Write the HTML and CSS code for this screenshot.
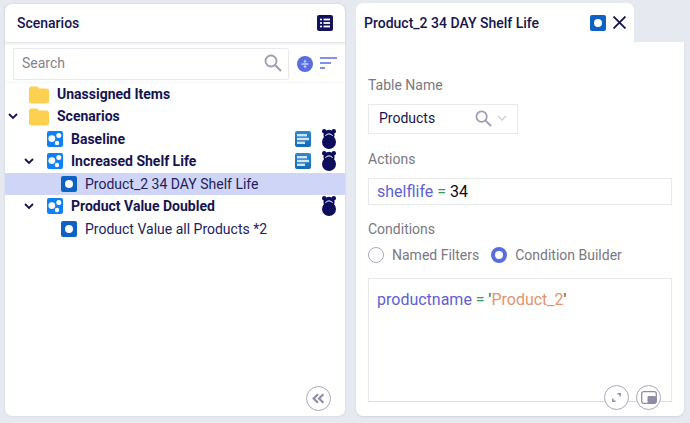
FILE: index.html
```html
<!DOCTYPE html>
<html lang="en">
<head>
<meta charset="utf-8">
<title>Scenarios</title>
<link rel="stylesheet" href="styles.css">
</head>
<body>
<svg class="defs" width="0" height="0" aria-hidden="true">
  <defs>
    <linearGradient id="listfill" x1="0" y1="0" x2="0" y2="1"><stop offset="0" stop-color="#2b8ad6"/><stop offset="1" stop-color="#1769b4"/></linearGradient>
    <symbol id="folder" viewBox="0 0 20 18"><path fill="#fdd04f" d="M0 3a2.500 2.500 0 0 1 2.500-2.500h4.500c1.300 0 2 .6 2.600 1.500l.4.500h7.500a2.500 2.500 0 0 1 2.500 2.500v10a2.500 2.500 0 0 1-2.500 2.500h-15a2.500 2.500 0 0 1-2.500-2.500z"/></symbol>
    <symbol id="scen" viewBox="0 0 16 16"><rect width="16" height="16" rx="2" fill="#0f80f5"/><circle cx="4.800" cy="7.600" r="3.400" fill="#fff"/><circle cx="11.800" cy="4.600" r="2.500" fill="#fff"/><circle cx="10" cy="12" r="2.200" fill="#fff"/></symbol>
    <symbol id="item" viewBox="0 0 16 16"><rect width="16" height="16" rx="2" fill="#0d62c4"/><circle cx="8" cy="8" r="4" fill="#fff"/></symbol>
    <symbol id="list" viewBox="0 0 16 16"><rect width="16" height="16" rx="2" fill="url(#listfill)"/><rect x="2" y="3" width="10" height="2.400" fill="#cfe4f6"/><rect x="2" y="6.800" width="12" height="2.400" fill="#cfe4f6"/><rect x="2" y="10.600" width="8" height="2.400" fill="#cfe4f6"/></symbol>
    <symbol id="timer" viewBox="0 0 14 20"><ellipse cx="7" cy="6" rx="5.600" ry="5.200" fill="#0d0d5c"/><circle cx="2.200" cy="2.200" r="2.200" fill="#0d0d5c"/><circle cx="11.800" cy="2.200" r="2.200" fill="#0d0d5c"/><circle cx="7" cy="13" r="7" fill="#0d0d5c"/><path d="M3.500 6.800C5 4.300 9 4.300 10.500 6.800" fill="none" stroke="#fff" stroke-width="1"/></symbol>
    <symbol id="chev" viewBox="0 0 10 7"><path d="M1 1l4 4 4-4" fill="none" stroke="#16144f" stroke-width="1.800"/></symbol>
    <symbol id="mag" viewBox="0 0 18 18"><circle cx="7" cy="7" r="5.500" fill="none" stroke="#9e9cb3" stroke-width="1.800"/><path d="M11 11l6 6" stroke="#9e9cb3" stroke-width="2"/></symbol>
  </defs>
</svg>
<main class="page">
  <section class="panel left">
    <header class="left-head">
      <h1 class="title">Scenarios</h1>
      <svg class="head-icon" viewBox="0 0 16 16"><rect width="16" height="16" rx="2" fill="#13105c"/><g fill="#fff"><circle cx="4" cy="4.500" r="1.100"/><circle cx="4" cy="8" r="1.100"/><circle cx="4" cy="11.500" r="1.100"/><rect x="6.500" y="3.600" width="6.500" height="1.800"/><rect x="6.500" y="7.100" width="6.500" height="1.800"/><rect x="6.500" y="10.600" width="6.500" height="1.800"/></g></svg>
    </header>
    <div class="toolbar">
      <div class="search">
        <span class="placeholder">Search</span>
        <svg class="mag"><use href="#mag"/></svg>
      </div>
      <svg class="tool-a" viewBox="0 0 16 16"><circle cx="8" cy="8" r="8" fill="#5a6de0"/><path d="M4.500 8h7" stroke="#fff"/><path d="M8 3.800v2.400M6.800 5.200L8 6.400l1.200-1.200M8 12.200V9.800M6.800 10.800L8 9.600l1.200 1.200" fill="none" stroke="#fff" stroke-width=".8"/></svg>
      <svg class="tool-b" viewBox="0 0 17 13"><path d="M0 1h17M0 6h11M0 11h5" stroke="#5a6de0" stroke-width="1.300"/></svg>
    </div>
    <ul class="tree">
      <li class="row b lvl0"><span class="tw"></span><svg class="folder"><use href="#folder"/></svg><span class="label">Unassigned Items</span></li>
      <li class="row b lvl0"><svg class="tw"><use href="#chev"/></svg><svg class="folder"><use href="#folder"/></svg><span class="label">Scenarios</span></li>
      <li class="row b lvl1"><span class="tw"></span><svg class="ic"><use href="#scen"/></svg><span class="label">Baseline</span><svg class="ic end"><use href="#list"/></svg><svg class="timer"><use href="#timer"/></svg></li>
      <li class="row b lvl1"><svg class="tw"><use href="#chev"/></svg><svg class="ic"><use href="#scen"/></svg><span class="label">Increased Shelf Life</span><svg class="ic end"><use href="#list"/></svg><svg class="timer"><use href="#timer"/></svg></li>
      <li class="row lvl2 sel"><svg class="ic"><use href="#item"/></svg><span class="label">Product_2 34 DAY Shelf Life</span></li>
      <li class="row b lvl1"><svg class="tw"><use href="#chev"/></svg><svg class="ic"><use href="#scen"/></svg><span class="label">Product Value Doubled</span><svg class="timer push"><use href="#timer"/></svg></li>
      <li class="row lvl2"><svg class="ic"><use href="#item"/></svg><span class="label">Product Value all Products *2</span></li>
    </ul>
    <div class="left-foot">
      <button class="round" aria-label="Collapse"><svg viewBox="0 0 12 10" class="dbl"><path d="M5.500 1L1.500 5l4 4M10.500 1l-4 4 4 4" fill="none" stroke="#8f8ca8" stroke-width="2"/></svg></button>
    </div>
  </section>

  <section class="right">
    <div class="tab">
      <h2 class="tab-title">Product_2 34 DAY Shelf Life</h2>
      <svg class="ic"><use href="#item"/></svg>
      <svg class="close" viewBox="0 0 12 12"><path d="M.5 .5l11 11M11.500 .5l-11 11" stroke="#16144f" stroke-width="1.700"/></svg>
    </div>
    <div class="panel form">
      <label class="field-label first">Table Name</label>
      <div class="select">
        <span class="sel-val">Products</span>
        <svg class="sel-mag"><use href="#mag"/></svg>
        <svg class="sel-chev" viewBox="0 0 10 7"><path d="M1 1l4 4 4-4" fill="none" stroke="#d0cfda" stroke-width="1.400"/></svg>
      </div>
      <label class="field-label">Actions</label>
      <div class="action"><span class="kw">shelflife</span> <span class="op">=</span> <span class="num">34</span></div>
      <label class="field-label cond">Conditions</label>
      <div class="radios">
        <span class="radio"></span><span class="radio-label">Named Filters</span>
        <span class="radio on"></span><span class="radio-label">Condition Builder</span>
      </div>
      <div class="editor">
        <span class="kw">productname</span> <span class="op">=</span> <span class="q">'</span><span class="str">Product_2</span><span class="q">'</span>
        <div class="editor-tools">
          <button class="round" aria-label="Expand"><svg viewBox="0 0 12 12" class="exp"><path d="M7 2h3v3M5 10H2V7" fill="none" stroke="#8f8ca8" stroke-width="1.600"/></svg></button>
          <button class="round" aria-label="Picture in picture"><svg viewBox="0 0 16 13" class="pip"><rect x=".7" y=".7" width="14.600" height="11.600" rx="2" fill="none" stroke="#8f8ca8" stroke-width="1.300"/><rect x="6.500" y="5" width="8.500" height="7" rx="1" fill="#8f8ca8"/></svg></button>
        </div>
      </div>
    </div>
  </section>
</main>
</body>
</html>
```
FILE: styles.css
```css
* { box-sizing: border-box; }
html, body { margin: 0; height: 100%; }
body {
  background: #e6e9f0;
  font-family: Roboto, "Liberation Sans", sans-serif;
  font-size: 14px;
  color: #16144f;
  overflow: hidden;
}
.defs { position: absolute; }
.page {
  display: flex;
  width: 690px;
  height: 423px;
  padding: 4px 6px 7px 5px;
  gap: 11px;
}
.panel { background: #fff; }
.left {
  width: 340px;
  border-radius: 7px;
  display: flex;
  flex-direction: column;
  box-shadow: 0 0 2px rgba(120, 125, 150, .25);
}
.left-head {
  height: 39px;
  flex: none;
  display: flex;
  align-items: center;
  justify-content: space-between;
  padding: 0 12px 1px 12px;
  border-bottom: 1px solid #e3e5ec;
  box-shadow: 0 1px 2px rgba(120, 125, 150, .15);
}
.title, .tab-title { margin: 0; font-size: 14px; font-weight: 500; }
.head-icon { width: 16px; height: 16px; }
.toolbar {
  display: flex;
  align-items: center;
  height: 39.500px;
  flex: none;
  padding: 4px 0 1px 8px;
  border-bottom: 1px solid #f6f7fa;
}
.search {
  width: 276px;
  height: 32px;
  border: 1px solid #e8e9ef;
  border-radius: 2px;
  display: flex;
  align-items: center;
  justify-content: space-between;
  padding: 0 6px 1px 8px;
}
.placeholder { color: #85838f; font-size: 14px; }
.mag { width: 18px; height: 18px; }
.tool-a { width: 16px; height: 16px; margin-left: 8px; }
.tool-b { width: 17px; height: 13px; margin-left: 7px; }
.tree { list-style: none; margin: 0; padding: 0; flex: none; }
.row {
  height: 22.500px;
  display: flex;
  align-items: center;
  padding-right: 9px;
}
.b .label { font-weight: 700; }
.lvl0 { padding-left: 3px; }
.lvl1 { padding-left: 16px; }
.lvl2 { padding-left: 56px; }
.sel { background: #cfd5f7; }
.tw { width: 10px; height: 7px; flex: none; margin-right: 11px; }
.lvl1 .tw { margin-left: 3px; margin-right: 13px; }
.folder { width: 20px; height: 18px; flex: none; margin-right: 8px; margin-top: 2px; }
.ic { width: 16px; height: 16px; flex: none; }
.label { margin-left: 8px; white-space: nowrap; }
.lvl0 .label { margin-left: 0; }
.lvl2 .label { margin-left: 8px; color: #23215c; }
.end { margin-left: auto; }
.timer { width: 14px; height: 20px; flex: none; margin-left: 11px; }
.push { margin-left: auto; }
.left-foot {
  margin-top: auto;
  display: flex;
  justify-content: flex-end;
  padding: 0 14px 5px 0;
}
.round {
  width: 25px;
  height: 25px;
  padding: 0;
  border: 1.500px solid #a9a7bc;
  border-radius: 50%;
  background: #fff;
  display: flex;
  align-items: center;
  justify-content: center;
}
.dbl { width: 13px; height: 11px; }
.exp { width: 11px; height: 11px; }
.pip { width: 16px; height: 13px; }
.right { width: 328px; display: flex; flex-direction: column; margin-top: -1px; }
.tab {
  width: 278px;
  height: 39px;
  flex: none;
  background: #fff;
  border-radius: 7px 7px 0 0;
  display: flex;
  align-items: center;
  padding: 0 8px 0 8px;
}
.tab-title { flex: 1; font-weight: 500; }
.close { width: 13px; height: 13px; margin-left: 7px; }
.form { flex: 1; padding: 0 12px; display: flex; flex-direction: column; border-radius: 0 0 7px 7px; box-shadow: 0 1px 2px rgba(120, 125, 150, .2); }
.field-label { color: #7a7880; font-size: 14px; line-height: 16px; }
.first { margin-top: 35px; }
.select {
  width: 150px;
  height: 30px;
  margin: 11px 0 17px;
  border: 1px solid #e8e9ef;
  display: flex;
  align-items: center;
  padding: 0 10px 2px;
  color: #16144f;
}
.sel-val { flex: 1; }
.sel-mag { width: 17px; height: 17px; }
.sel-chev { width: 10px; height: 7px; margin-left: 5px; }
.action {
  width: 304px;
  height: 27px;
  margin-top: 11px;
  border: 1px solid #e8e9ef;
  padding: 0 8px;
  display: flex;
  align-items: center;
  gap: 4px;
  font-size: 16px;
  white-space: pre;
}
.kw { color: #5e5fd4; }
.op { color: #2f9a62; }
.num { color: #0a0a14; }
.str { color: #e3946c; }
.q { color: #333; }
.cond { margin-top: 16px; }
.radios { display: flex; align-items: center; height: 20px; margin-top: 8px; color: #7a7880; }
.radio { width: 16px; height: 16px; border: 1px solid #a9a7bc; border-radius: 50%; flex: none; }
.radio.on { border: 4px solid #5a6de0; margin-left: 12px; }
.radio-label { margin-left: 8px; }
.editor {
  position: relative;
  width: 304px;
  height: 124px;
  margin-top: 13px;
  border: 1px solid #e8e9ef;
  border-bottom-color: #dcdde5;
  padding: 11px 8px;
  font-size: 16px;
  line-height: 19px;
}
.editor-tools {
  position: absolute;
  right: 10px;
  bottom: -9px;
  display: flex;
  gap: 7px;
}
```
